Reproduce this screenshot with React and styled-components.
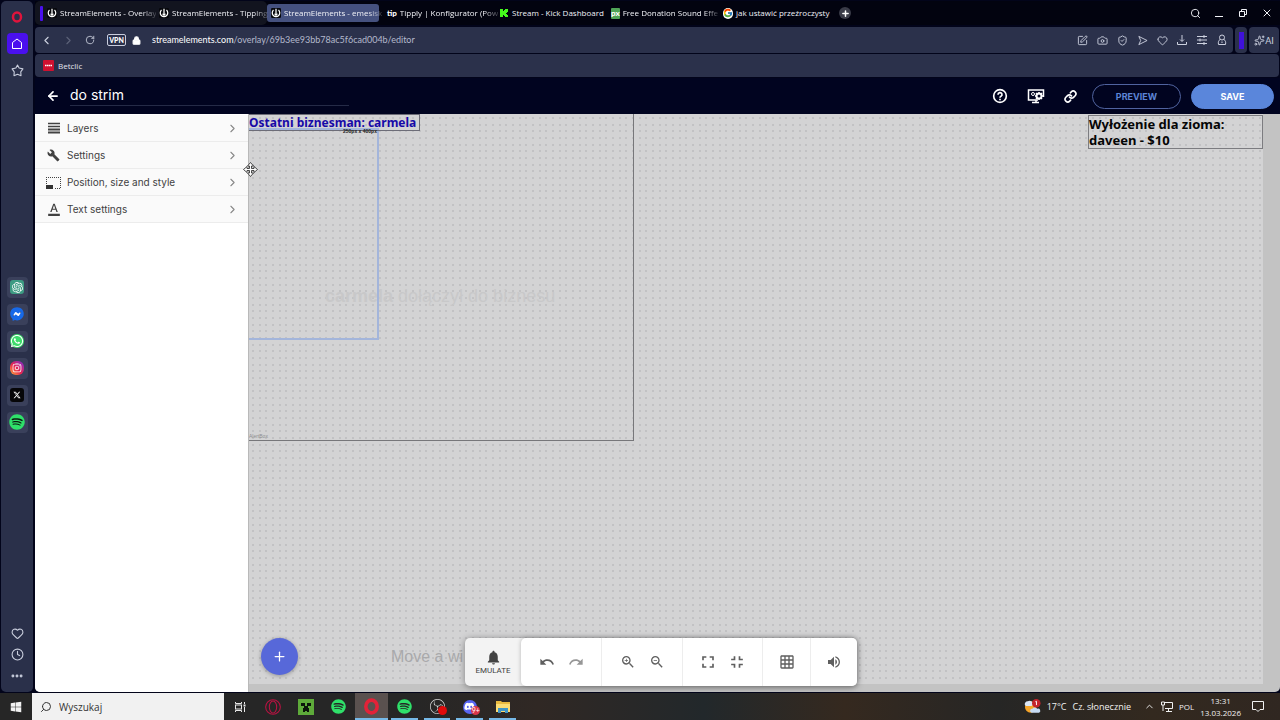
import styled, { createGlobalStyle, css } from "styled-components";
import {
  MdBuild,
  MdFormatColorText,
  MdFullscreen,
  MdFullscreenExit,
  MdGridOn,
  MdNotifications,
  MdRedo,
  MdUndo,
  MdVolumeUp,
  MdZoomIn,
  MdZoomOut,
} from "react-icons/md";
import {
  FaDiscord,
  FaFacebookMessenger,
  FaInstagram,
  FaSpotify,
  FaWhatsapp,
  FaWindows,
  FaXTwitter,
} from "react-icons/fa6";
import { SiObsstudio, SiOpenai } from "react-icons/si";
import { FcGoogle } from "react-icons/fc";
import {
  ArrowLeft,
  Camera,
  ChevronLeft,
  ChevronRight,
  ChevronUp,
  Clock,
  Ellipsis,
  Heart,
  Link,
  Lock,
  Plus,
  RotateCw,
  Search,
  ShieldCheck,
  Sparkles,
  SquarePen,
  X,
} from "lucide-react";

const GlobalStyle = createGlobalStyle`
  * {
    box-sizing: border-box;
  }

  body {
    margin: 0;
    background: #02041a;
    font-family: Lato, "Noto Sans", sans-serif;
  }

  button,
  input {
    margin: 0;
    padding: 0;
    border: none;
    background: none;
    color: inherit;
    font-family: inherit;
  }

  button {
    display: flex;
    align-items: center;
    justify-content: center;
  }

  a {
    color: inherit;
    text-decoration: none;
  }

  svg {
    display: block;
    flex-shrink: 0;
  }
`;

const Screen = styled.div`
  height: 100vh;
  display: flex;
  flex-direction: column;
  overflow: hidden;
`;

const Browser = styled.div`
  flex: 1;
  min-height: 0;
  display: flex;
  gap: 2px;
  padding: 1px 0 1px 1px;
`;

/* Sidebar */

const Sidebar = styled.aside`
  width: 32px;
  display: flex;
  flex-direction: column;
  justify-content: space-between;
  padding: 5px 0 6px;
  border-radius: 5px;
  background: #2a304a;
  color: #c9cedd;
`;

const SideGroup = styled.nav`
  display: flex;
  flex-direction: column;
  align-items: center;
  gap: ${(p) => p.$gap}px;
  padding-top: ${(p) => p.$top || 0}px;
`;

const SideButton = styled.button`
  width: 21px;
  height: 21px;
  border-radius: 4px;
  background: ${(p) => p.$bg || "none"};
`;

const AppTile = styled.span`
  width: 14px;
  height: 14px;
  display: flex;
  align-items: center;
  justify-content: center;
  border-radius: ${(p) => p.$radius || 3}px;
  background: ${(p) => p.$bg};
  color: ${(p) => p.$color || "#fff"};
`;

/* Browser top bars */

const Main = styled.div`
  flex: 1;
  min-width: 0;
  display: flex;
  flex-direction: column;
`;

const TabBar = styled.div`
  height: 24px;
  margin-bottom: 2px;
  display: flex;
  align-items: center;
  justify-content: space-between;
  background: #02030f;
  color: #f1f2f7;
`;

const Tabs = styled.div`
  display: flex;
  align-items: center;
`;

const TabGroup = styled.div`
  height: 24px;
  display: flex;
  align-items: center;
  padding-left: 5px;
  border-radius: 5px;
  background: #12141f;
`;

const LooseTabs = styled.div`
  display: flex;
  padding-left: 4px;
`;

const GroupMark = styled.span`
  width: 3px;
  height: 15px;
  border-radius: 1px;
  background: #4a10ee;
`;

const Tab = styled.button`
  width: 112px;
  height: 18px;
  justify-content: flex-start;
  gap: 3px;
  padding: 0 4px;
  border-radius: 3px;
  font-family: "Open Sans", "Noto Sans", sans-serif;
  font-size: 8px;
  line-height: 14px;
  background: ${(p) => (p.$active ? "#45517f" : "none")};

  svg {
    width: 10px;
    height: 10px;
  }
`;

const TabTitle = styled.span`
  white-space: pre;
  text-align: left;
  ${(p) => p.$fade && "mask-image: linear-gradient(90deg, #000 85%, rgba(0, 0, 0, 0.2));"}
`;

const TabMark = styled.span`
  display: flex;
  align-items: center;
  justify-content: center;
  width: 11px;
  height: 11px;
  border-radius: ${(p) => (p.$round ? 6 : 1)}px;
  background: ${(p) => p.$bg || "none"};
  color: #fff;
  font-family: Lato, sans-serif;
  font-size: 8px;
  font-weight: 900;
  line-height: 10px;
`;

const NewTab = styled.button`
  width: 12px;
  height: 12px;
  margin-left: 8px;
  border-radius: 50%;
  background: #3a3c48;
  color: #fff;
`;

const WindowButtons = styled.div`
  display: flex;
  gap: 12px;
  padding-right: 7px;

  button {
    width: 12px;
    height: 14px;
  }
`;

const AddressRow = styled.div`
  height: 26px;
  display: flex;
  gap: 2px;
  padding-right: 1px;
`;

const barStyle = css`
  display: flex;
  align-items: center;
  border-radius: 4px;
  background: #2b314b;
  color: #cdd1df;
`;

const AddressBar = styled.div`
  ${barStyle}
  flex: 1;
  min-width: 0;
  padding: 0 5px 0 4px;
`;

const NavButtons = styled.div`
  display: flex;
  gap: 8px;

  button {
    width: 14px;
    height: 14px;
  }
`;

const Vpn = styled.button`
  width: 19px;
  height: 12px;
  margin: 0 6px 0 10px;
  border: 1px solid #c9cddd;
  border-radius: 2px;
  color: #fff;
  font-size: 7px;
  font-weight: 900;
  line-height: 9px;
`;

const Url = styled.a`
  flex: 1;
  margin-left: 11px;
  font-size: 9px;
  line-height: 16px;
  color: #b4b9cc;

  b {
    color: #fff;
    font-weight: 400;
  }
`;

const AddressTools = styled.div`
  display: flex;
  gap: 8px;

  button {
    width: 12px;
    height: 14px;
  }
`;

const PurpleSlot = styled.div`
  ${barStyle}
  width: 12px;
  justify-content: center;

  span {
    width: 5px;
    height: 17px;
    background: #3f11da;
  }
`;

const AiButton = styled.button`
  ${barStyle}
  width: 30px;
  font-size: 9px;
`;

const Bookmarks = styled.div`
  ${barStyle}
  height: 23px;
  margin: 1px 1px 1px 0;
  padding: 0 8px;
`;

const Bookmark = styled.a`
  display: flex;
  align-items: center;
  gap: 4px;
  font-family: "Open Sans", "Noto Sans", sans-serif;
  font-size: 8px;
  line-height: 14px;
  color: #e3e5ee;
`;

/* Overlay editor */

const EditorHeader = styled.header`
  height: 36px;
  display: flex;
  align-items: center;
  justify-content: space-between;
  padding: 0 6px 0 11px;
  background: #010420;
  color: #fff;
  font-family: Inter, sans-serif;
`;

const TitleBox = styled.div`
  display: flex;
  align-items: center;
  gap: 10px;
`;

const TitleInput = styled.input`
  width: 279px;
  height: 20px;
  padding-bottom: 2px;
  border-bottom: 1px solid #252b47;
  font-size: 14px;
  line-height: 16px;
  outline: none;
`;

const HeaderActions = styled.div`
  display: flex;
  align-items: center;
  gap: 15px;
`;

const HeaderIcons = styled.div`
  display: flex;
  align-items: center;
  gap: 19px;
`;

const Pills = styled.div`
  display: flex;
  gap: 10px;
`;

const Pill = styled.button`
  width: ${(p) => (p.$filled ? 83 : 89)}px;
  height: 25px;
  border: 1px solid ${(p) => (p.$filled ? "#5a86db" : "#50639f")};
  border-radius: 13px;
  background: ${(p) => (p.$filled ? "#5a86db" : "none")};
  color: ${(p) => (p.$filled ? "#fff" : "#5d84d6")};
  font-size: 9px;
  font-weight: 700;
`;

const Editor = styled.div`
  flex: 1;
  min-height: 0;
  display: flex;
  overflow: hidden;
  border-radius: 0 0 5px 5px;
  background: #c3c3c3;
`;

const Panel = styled.div`
  width: 214px;
  padding-top: 1px;
  background: #fff;
  border-right: 1px solid #b9b9b9;
`;

const PanelRow = styled.button`
  width: 100%;
  height: 27px;
  justify-content: flex-start;
  gap: 6px;
  padding: 0 9px 0 11px;
  border-bottom: 1px solid #ececec;
  background: #fafafa;
  color: #424242;
  font-family: Inter, sans-serif;
  font-size: 10px;
  line-height: 14px;
`;

const PanelIcon = styled.span`
  width: 15px;
  display: flex;
  justify-content: center;
`;

const PanelLabel = styled.span`
  flex: 1;
  text-align: left;
`;

const dotAt = (x, y) =>
  `radial-gradient(circle at ${x}px ${y}px, #99999c 0, transparent 1px)`;
const steps = [4, 11, 17];
const dots = steps.flatMap((y) => steps.map((x) => dotAt(x, y))).join(", ");

const Stage = styled.main`
  flex: 1;
  position: relative;
  padding: 0 17px 8px 0;
`;

const Canvas = styled.div`
  height: 100%;
  position: relative;
  overflow: hidden;
  background-color: #d3d3d4;
  background-image: ${dots};
  background-size: 20px 20px;
`;

const Widget = styled.div`
  position: absolute;
  left: ${(p) => p.$x}px;
  top: ${(p) => p.$y}px;
  width: ${(p) => p.$w}px;
  height: ${(p) => p.$h}px;
  border: ${(p) => p.$border || "none"};
  ${(p) => p.$right !== undefined && `left: auto; right: ${p.$right}px;`}
`;

const WidgetText = styled.p`
  margin: 0;
  font-family: "Noto Sans", sans-serif;
  font-size: ${(p) => p.$size || 13}px;
  font-weight: 700;
  line-height: 16px;
  white-space: nowrap;
  color: ${(p) => p.$color || "#050505"};
`;

const Caption = styled.span`
  position: absolute;
  left: ${(p) => p.$x}px;
  top: ${(p) => p.$y}px;
  font-family: "Liberation Sans", sans-serif;
  font-size: ${(p) => p.$size}px;
  font-weight: ${(p) => p.$weight || 400};
  line-height: ${(p) => p.$size + 2}px;
  white-space: nowrap;
  color: ${(p) => p.$color};
`;

const MoveCursor = styled.svg`
  position: absolute;
  left: -6px;
  top: 48px;
`;

const AddButton = styled.button`
  position: absolute;
  left: 12px;
  bottom: 17px;
  width: 37px;
  height: 37px;
  border-radius: 50%;
  background: #5768d9;
  color: #fff;
  box-shadow: 0 1px 4px rgba(0, 0, 0, 0.3);
`;

const Toolbar = styled.div`
  position: absolute;
  left: 216px;
  bottom: 6px;
  height: 48px;
  display: flex;
  border-radius: 5px;
  background: #f3f3f3;
  color: #5f5f5f;
  box-shadow: 0 1px 7px rgba(0, 0, 0, 0.4);
`;

const Emulate = styled.button`
  width: 56px;
  flex-direction: column;
  color: #424242;
  font-family: Roboto, sans-serif;
  font-size: 8px;
  line-height: 10px;
`;

const Tools = styled.div`
  display: flex;
  border-radius: 5px;
  background: #fff;
  box-shadow: 0 0 4px rgba(0, 0, 0, 0.25);
`;

const ToolSet = styled.div`
  width: ${(p) => p.$width}px;
  display: flex;
  align-items: center;
  justify-content: center;
  gap: 13px;

  & + & {
    border-left: 1px solid #ededed;
  }
`;

const ToolButton = styled.button`
  width: 16px;
  height: 16px;
  opacity: ${(p) => (p.$dim ? 0.65 : 1)};
`;

/* Windows taskbar */

const Taskbar = styled.footer`
  height: 27px;
  display: flex;
  justify-content: space-between;
  background: linear-gradient(90deg, #262626 0 32%, #302824 42%, #22282b 55%, #35291f 66%, #262625 78%, #33291f 90%, #302721);
  color: #f1f1f1;
`;

const TaskGroup = styled.div`
  display: flex;
  align-items: center;
`;

const TaskApps = styled.div`
  width: 295px;
  display: flex;
`;

const TaskButton = styled.button`
  flex: 1;
  min-width: 32px;
  height: 27px;
  position: relative;
  background: ${(p) => (p.$active ? "#5a514f" : "none")};

  &::after {
    content: "";
    display: ${(p) => (p.$open ? "block" : "none")};
    position: absolute;
    left: ${(p) => (p.$active ? 0 : 3)}px;
    right: ${(p) => (p.$active ? 0 : 3)}px;
    bottom: 0;
    height: 2px;
    background: #76b9e8;
  }
`;

const SearchBox = styled.label`
  width: 192px;
  height: 27px;
  display: flex;
  align-items: center;
  gap: 7px;
  padding-left: 8px;
  background: #f1f1f1;
  color: #333;

  svg {
    transform: scaleX(-1);
  }

  input {
    width: 150px;
    font-family: "Open Sans", "Noto Sans", sans-serif;
    font-size: 10px;
    line-height: 16px;
    outline: none;
  }

  input::placeholder {
    color: #333;
    opacity: 1;
  }
`;

const Badge = styled.span`
  position: absolute;
  right: 6px;
  bottom: 5px;
  min-width: 9px;
  height: 9px;
  border-radius: 5px;
  background: ${(p) => p.$color};
  color: #fff;
  font-size: 7px;
  line-height: 9px;
`;

const Tray = styled.div`
  display: flex;
  align-items: center;
  gap: 6px;
  padding-right: 16px;
  font-family: "Open Sans", "Noto Sans", sans-serif;
  font-size: 8px;
  line-height: 12px;
  white-space: nowrap;
`;

const Weather = styled.button`
  gap: 6px;
  margin-right: 7px;
  font-size: 9px;
`;

const ClockText = styled.time`
  text-align: center;
  margin-right: 5px;
`;

const OperaMark = ({ size = 12, color = "#e0143c", thick }) => (
  <svg width={size} height={size} viewBox="0 0 24 24" fill="none" stroke={color}>
    {thick ? (
      <ellipse cx="12" cy="12" rx="8" ry="9" strokeWidth="5" />
    ) : (
      <>
        <circle cx="12" cy="12" r="11" strokeWidth="1.6" />
        <ellipse cx="12" cy="12" rx="5.5" ry="9" strokeWidth="1.6" />
      </>
    )}
  </svg>
);

const ElementsMark = () => (
  <svg viewBox="0 0 24 24">
    <rect width="24" height="24" rx="3" fill="#07080d" />
    <path d="M6 5A9 9 0 1 0 18 5" fill="none" stroke="#fff" strokeWidth="3" />
    <path d="M12 2v13" stroke="#fff" strokeWidth="3" />
    <path d="M7 14h10l-5 6z" fill="#fff" />
  </svg>
);

const KickMark = () => (
  <svg viewBox="0 0 10 10" fill="#45f91c">
    <path d="M1 1h3v2h1V2h1V1h3v3H8v1H7v1h1v1h1v2H6V8H5V7H4v2H1z" />
  </svg>
);

const HomeIcon = () => (
  <svg width="12" height="12" viewBox="0 0 24 24" fill="none" stroke="#fff" strokeWidth="2" strokeLinejoin="round">
    <path d="M12 2 3 9v12h18V9z" />
  </svg>
);

const PentaStar = () => (
  <svg width="13" height="13" viewBox="0 0 24 24" fill="none" stroke="currentColor" strokeWidth="2" strokeLinejoin="round">
    <path d="m12 2 3 5.500 7 1.500-4 5.500.5 7L12 19l-6.500 2.500.5-7L2 9l7-1.500z" />
  </svg>
);

const MinimizeIcon = () => (
  <svg width="10" height="10" viewBox="0 0 10 10">
    <path d="M1 8.500h8" stroke="currentColor" />
  </svg>
);

const RestoreIcon = () => (
  <svg width="10" height="10" viewBox="0 0 10 10" fill="none" stroke="currentColor">
    <path d="M1.500 3.500h5v5h-5zM3.500 3.500v-2h5v5h-2" />
  </svg>
);

const SendIcon = () => (
  <svg width="11" height="11" viewBox="0 0 24 24" fill="none" stroke="currentColor" strokeWidth="2" strokeLinejoin="round">
    <path d="M4 3l18 9-18 9 4-9z" />
  </svg>
);

const DownloadIcon = () => (
  <svg width="12" height="12" viewBox="0 0 12 12" fill="none" stroke="currentColor">
    <path d="M6 1v6M4 5.500l2 2 2-2M1.500 8v2.500h9V8" />
  </svg>
);

const SettingsLines = () => (
  <svg width="12" height="12" viewBox="0 0 12 12" fill="none" stroke="currentColor">
    <path d="M1 2.500h10M1 6h10M1 9.500h10M8 1v3M4 4.500v3M8 8v3" />
  </svg>
);

const AvatarIcon = () => (
  <svg width="12" height="12" viewBox="0 0 24 24" fill="none" stroke="currentColor" strokeWidth="2">
    <circle cx="12" cy="7" r="5" />
    <path d="M8 11c-3 2-4 5-3 10h14c1-5 0-8-3-10M12 15v3" />
  </svg>
);

const BetclicMark = () => (
  <svg width="11" height="11" viewBox="0 0 11 11">
    <rect width="11" height="11" rx="1" fill="#cf1130" />
    <path d="M2 5.500h7" stroke="#fff" strokeWidth="1.500" strokeDasharray="1.500 .4" />
  </svg>
);

const HelpIcon = () => (
  <svg width="16" height="16" viewBox="0 0 24 24" fill="none" stroke="currentColor" strokeWidth="2.500">
    <circle cx="12" cy="12" r="9.500" />
    <path d="M9 10a3 3 0 1 1 4.500 2.500c-1 .6-1.500 1-1.500 2.200M12 16v2.500" />
  </svg>
);

const DisplayIcon = () => (
  <svg width="18" height="16" viewBox="0 0 18 16" fill="none" stroke="currentColor">
    <path d="M11 12H1.500V2h15v7" strokeWidth="1.500" />
    <path d="M5 14.500h7M9 12v2" strokeWidth="1.500" />
    <circle cx="6" cy="6" r="1.500" />
    <circle cx="12" cy="8" r="2.500" strokeWidth="2" />
    <path d="M12 4v1.500M12 10.500V12M8 8h1.500M14.500 8H16M9 5l1 1M15 5l-1 1M9 11l1-1M15 11l-1-1" strokeWidth="1.500" />
  </svg>
);

const LayersIcon = () => (
  <svg width="12" height="12" viewBox="0 0 12 12" stroke="#424242">
    <path d="M0 1.500h12M0 4.500h12" strokeWidth="1.500" />
    <path d="M0 7.500h12M0 10.500h12" strokeWidth="2" />
  </svg>
);

const SizeIcon = () => (
  <svg width="15" height="13" viewBox="0 0 15 13">
    <path
      d="M0 1.500h15M.5 3v5M14.500 3v10M9 12.500h5"
      fill="none"
      stroke="#424242"
      strokeDasharray="1 1"
      shapeRendering="crispEdges"
    />
    <rect x="0" y="9" width="7" height="4" fill="#333" />
  </svg>
);

const CreeperIcon = () => (
  <svg width="16" height="16" viewBox="0 0 16 16">
    <rect width="16" height="16" fill="#5eaa3a" />
    <path d="M3 4h4v3H3zM9 4h4v3H9zM6 7h4v2h1v4H9v-1H7v1H5V9h1z" fill="#0b140a" />
  </svg>
);

const TaskViewIcon = () => (
  <svg width="12" height="12" viewBox="0 0 12 12" fill="none" stroke="#e8e8e8">
    <rect x="1.500" y="4" width="6" height="4" />
    <path d="M1.500 1v1.500h6V1M1.500 11V9.500h6V11M10.500 1v2M10.500 6v5" />
    <path d="M9.500 4.500h2" strokeWidth="2" />
  </svg>
);

const FolderIcon = () => (
  <svg width="16" height="14" viewBox="0 0 16 14">
    <path d="M1 1h5l1 1h8v10H1z" fill="#e9b93f" />
    <path d="M1 4h14v8H1z" fill="#fbdc74" />
    <path d="M3 13V8h10v5h-3v-2H6v2z" fill="#3f95c6" />
  </svg>
);

const WeatherIcon = () => (
  <svg width="17" height="17" viewBox="0 0 18 17">
    <circle cx="7" cy="9" r="6" fill="#f5a52a" />
    <path d="M1 7a3 3 0 0 1 3-4 4 4 0 0 1 6 3l-2 2H2z" fill="#dbe6f5" />
    <path d="M8 15a2 2 0 0 1 1-4 3 3 0 0 1 5 0 2 2 0 0 1 2 4z" fill="#c7dbf4" />
    <circle cx="13" cy="5" r="4.500" fill="#c3232b" />
    <path d="M12 3.500 13.200 3v4" fill="none" stroke="#fff" />
  </svg>
);

const NetworkIcon = () => (
  <svg width="12" height="11" viewBox="0 0 12 11" fill="none" stroke="currentColor">
    <path d="M4 1.500h7.500v6H4M7.500 8v2M5 10.500h6M.5 1v3h3V1zM2 4v6" />
  </svg>
);

const NotificationIcon = () => (
  <svg width="12" height="13" viewBox="0 0 12 13" fill="none" stroke="currentColor">
    <path d="M.5 1.500h11v8H8l-2 2-2-2H.5z" />
  </svg>
);

const sideApps = [
  { name: "ChatGPT", bg: "#3d9b83", icon: <SiOpenai size={11} /> },
  {
    name: "Messenger",
    bg: "radial-gradient(#fff 35%, transparent 40%)",
    color: "#1769e8",
    icon: <FaFacebookMessenger size={14} />,
  },
  { name: "WhatsApp", bg: "#3ddc6b", radius: 7, icon: <FaWhatsapp size={14} /> },
  {
    name: "Instagram",
    bg: "linear-gradient(45deg, #fdb23a, #e8264f 45%, #7a2bd8)",
    radius: 6,
    icon: <FaInstagram size={10} />,
  },
  { name: "X", bg: "#060608", icon: <FaXTwitter size={8} /> },
  { name: "Spotify", bg: "#0b1a10", radius: 8, color: "#2fe06a", icon: <FaSpotify size={16} /> },
];

const groupedTabs = ["StreamElements - Overlay", "StreamElements - Tipping"];

const tabs = [
  { title: "Tipply | Konfigurator (Pow", icon: <TabMark>tip</TabMark>, fade: true },
  { title: "Stream - Kick Dashboard", icon: <KickMark /> },
  { title: "Free Donation Sound Effe", icon: <TabMark $bg="#4fa457">px</TabMark>, fade: true },
  {
    title: "jak ustawić przeźroczysty",
    icon: (
      <TabMark $bg="#fff" $round>
        <FcGoogle />
      </TabMark>
    ),
  },
];

const pageTools = [
  ["Edit page", SquarePen],
  ["Snapshot", Camera],
  ["Protection", ShieldCheck],
  ["Send", SendIcon],
  ["Favourite", Heart],
  ["Downloads", DownloadIcon],
  ["Setup", SettingsLines],
  ["Profile", AvatarIcon],
];

const panelRows = [
  { label: "Layers", icon: <LayersIcon /> },
  { label: "Settings", icon: <MdBuild size={13} /> },
  { label: "Position, size and style", icon: <SizeIcon /> },
  { label: "Text settings", icon: <MdFormatColorText size={14} /> },
];

const toolSets = [
  { width: 80, tools: [["Undo", MdUndo], ["Redo", MdRedo, true]] },
  { width: 81, tools: [["Zoom in", MdZoomIn], ["Zoom out", MdZoomOut]] },
  { width: 80, tools: [["Fit", MdFullscreen, false, 20], ["Shrink", MdFullscreenExit, false, 20]] },
  { width: 48, tools: [["Grid", MdGridOn]] },
  { width: 47, tools: [["Sound", MdVolumeUp]] },
];

const taskApps = [
  { name: "Task view", icon: <TaskViewIcon /> },
  { name: "Opera GX", icon: <OperaMark size={16} color="#b81342" /> },
  { name: "Minecraft", icon: <CreeperIcon /> },
  { name: "Spotify", icon: <FaSpotify size={15} color="#2fe06a" /> },
  { name: "Opera", icon: <OperaMark size={17} color="#e32238" thick />, active: true, open: true },
  { name: "Spotify player", icon: <FaSpotify size={15} color="#2fe06a" />, open: true },
  {
    name: "OBS Studio",
    icon: <SiObsstudio size={15} color="#d8d8d8" />,
    badge: " ",
    badgeColor: "#e00b0b",
    open: true,
  },
  {
    name: "Discord",
    icon: (
      <AppTile $bg="#5865f2" $radius={8}>
        <FaDiscord size={11} />
      </AppTile>
    ),
    badge: "9+",
    badgeColor: "#d8364a",
    open: true,
  },
  { name: "Explorer", icon: <FolderIcon />, open: true },
];

function BrowserSidebar() {
  return (
    <Sidebar>
      <SideGroup $gap={6}>
        <SideButton aria-label="Opera">
          <OperaMark size={12} thick />
        </SideButton>
        <SideButton aria-label="Home" $bg="#4a10ee">
          <HomeIcon />
        </SideButton>
        <SideButton aria-label="Bookmarks">
          <PentaStar />
        </SideButton>
      </SideGroup>
      <SideGroup $gap={6} $top={5}>
        {sideApps.map((app) => (
          <SideButton key={app.name} aria-label={app.name} $bg="#3a405b">
            <AppTile $bg={app.bg} $radius={app.radius} $color={app.color}>
              {app.icon}
            </AppTile>
          </SideButton>
        ))}
      </SideGroup>
      <SideGroup $gap={0}>
        <SideButton aria-label="Liked">
          <Heart size={13} strokeWidth={2} />
        </SideButton>
        <SideButton aria-label="History">
          <Clock size={13} strokeWidth={2} />
        </SideButton>
        <SideButton aria-label="More">
          <Ellipsis size={14} strokeWidth={3} />
        </SideButton>
      </SideGroup>
    </Sidebar>
  );
}

function BrowserTop() {
  return (
    <>
      <TabBar>
        <Tabs>
          <TabGroup>
            <GroupMark />
            {groupedTabs.map((title) => (
              <Tab key={title}>
                <ElementsMark />
                <TabTitle $fade>{title}</TabTitle>
              </Tab>
            ))}
          </TabGroup>
          <Tab $active>
            <ElementsMark />
            <TabTitle $fade>StreamElements - emesisk</TabTitle>
          </Tab>
          <LooseTabs>
            {tabs.map((tab) => (
              <Tab key={tab.title}>
                {tab.icon}
                <TabTitle $fade={tab.fade}>{tab.title}</TabTitle>
              </Tab>
            ))}
          </LooseTabs>
          <NewTab aria-label="New tab">
            <Plus size={9} strokeWidth={4} />
          </NewTab>
        </Tabs>
        <WindowButtons>
          <button aria-label="Search tabs"><Search size={11} /></button>
          <button aria-label="Minimize"><MinimizeIcon /></button>
          <button aria-label="Restore"><RestoreIcon /></button>
          <button aria-label="Close"><X size={12} /></button>
        </WindowButtons>
      </TabBar>
      <AddressRow>
        <AddressBar>
          <NavButtons>
            <button aria-label="Back"><ChevronLeft size={13} /></button>
            <button aria-label="Forward"><ChevronRight size={13} opacity={0.3} /></button>
            <button aria-label="Reload"><RotateCw size={10} strokeWidth={2} /></button>
          </NavButtons>
          <Vpn>VPN</Vpn>
          <Lock size={9} fill="#fff" color="#fff" strokeWidth={3} />
          <Url href="#">
            <b>streamelements.com</b>/overlay/69b3ee93bb78ac5f6cad004b/editor
          </Url>
          <AddressTools>
            {pageTools.map(([name, Icon]) => (
              <button key={name} aria-label={name}>
                <Icon size={11} />
              </button>
            ))}
          </AddressTools>
        </AddressBar>
        <PurpleSlot>
          <span />
        </PurpleSlot>
        <AiButton>
          <Sparkles size={11} />
          AI
        </AiButton>
      </AddressRow>
      <Bookmarks>
        <Bookmark href="#">
          <BetclicMark />
          Betclic
        </Bookmark>
      </Bookmarks>
    </>
  );
}

function OverlayEditor() {
  return (
    <>
      <EditorHeader>
        <TitleBox>
          <button aria-label="Back to overlays">
            <ArrowLeft size={14} strokeWidth={3} />
          </button>
          <TitleInput aria-label="Overlay name" defaultValue="do strim" />
        </TitleBox>
        <HeaderActions>
          <HeaderIcons>
            <button aria-label="Help"><HelpIcon /></button>
            <button aria-label="Display settings"><DisplayIcon /></button>
            <button aria-label="Copy link"><Link size={13} strokeWidth={3} /></button>
          </HeaderIcons>
          <Pills>
            <Pill>PREVIEW</Pill>
            <Pill $filled>SAVE</Pill>
          </Pills>
        </HeaderActions>
      </EditorHeader>
      <Editor>
        <Panel>
          {panelRows.map((row) => (
            <PanelRow key={row.label}>
              <PanelIcon>{row.icon}</PanelIcon>
              <PanelLabel>{row.label}</PanelLabel>
              <ChevronRight size={13} color="#888" />
            </PanelRow>
          ))}
        </Panel>
        <Stage>
          <Canvas>
            <Widget $x={-2} $y={-2} $w={387} $h={329} $border="1px solid #77777a" />
            <Caption $x={0} $y={319} $size={5} $color="#8e8e90">AlertBox</Caption>
            <Caption $x={76} $y={172} $size={18} $color="#c8c8c9">
              <b>carmela</b> dołączył do biznesu
            </Caption>
            <Widget $x={-2} $y={14} $w={132} $h={212} $border="2px solid #a3b5db" />
            <Widget $x={-1} $y={0} $w={172} $h={17} $border="1px solid #6d6d78">
              <WidgetText $size={12} $color="#1709a8">Ostatni biznesman: carmela</WidgetText>
            </Widget>
            <Caption $x={94} $y={14} $size={5} $weight={700} $color="#1c1c1c">250px x 400px</Caption>
            <Widget $right={0} $y={1} $w={175} $h={34} $border="1px solid #7c7c80">
              <WidgetText>Wyłożenie dla zioma:</WidgetText>
              <WidgetText>daveen - $10</WidgetText>
            </Widget>
            <Caption $x={142} $y={534} $size={16} $color="#a9a9ab">Move a wi</Caption>
          </Canvas>
          <MoveCursor width="15" height="15" viewBox="0 0 15 15">
            <path
              d="M7.500.5 10.500 4H8.500v2.500H11v-2l3.500 3-3.500 3v-2H8.500V11h2l-3 3.500L4.500 11h2V8.500H4v2L.5 7.500l3.500-3v2h2.500V4h-2z"
              fill="#fff"
              stroke="#222"
              strokeWidth=".8"
            />
          </MoveCursor>
          <AddButton aria-label="Add widget">
            <Plus size={15} strokeWidth={2} />
          </AddButton>
          <Toolbar>
            <Emulate>
              <MdNotifications size={17} />
              EMULATE
            </Emulate>
            <Tools>
              {toolSets.map((set) => (
                <ToolSet key={set.tools[0][0]} $width={set.width}>
                  {set.tools.map(([name, Icon, dim, size]) => (
                    <ToolButton key={name} aria-label={name} $dim={dim}>
                      <Icon size={size || 16} />
                    </ToolButton>
                  ))}
                </ToolSet>
              ))}
            </Tools>
          </Toolbar>
        </Stage>
      </Editor>
    </>
  );
}

function WindowsTaskbar() {
  return (
    <Taskbar>
      <TaskGroup>
        <TaskButton aria-label="Start">
          <FaWindows size={12} />
        </TaskButton>
        <SearchBox>
          <Search size={12} strokeWidth={2} />
          <input aria-label="Wyszukaj" placeholder="Wyszukaj" />
        </SearchBox>
        <TaskApps>
          {taskApps.map((app) => (
            <TaskButton key={app.name} aria-label={app.name} $active={app.active} $open={app.open}>
              {app.icon}
              {app.badge && <Badge $color={app.badgeColor}>{app.badge}</Badge>}
            </TaskButton>
          ))}
        </TaskApps>
      </TaskGroup>
      <Tray>
        <Weather>
          <WeatherIcon />
          <span>17°C</span>
          <span>Cz. słonecznie</span>
        </Weather>
        <ChevronUp size={11} />
        <NetworkIcon />
        <span>POL</span>
        <ClockText>
          13:31
          <br />
          13.03.2026
        </ClockText>
        <NotificationIcon />
      </Tray>
    </Taskbar>
  );
}

function App() {
  return (
    <Screen>
      <GlobalStyle />
      <Browser>
        <BrowserSidebar />
        <Main>
          <BrowserTop />
          <OverlayEditor />
        </Main>
      </Browser>
      <WindowsTaskbar />
    </Screen>
  );
}

export default App;
